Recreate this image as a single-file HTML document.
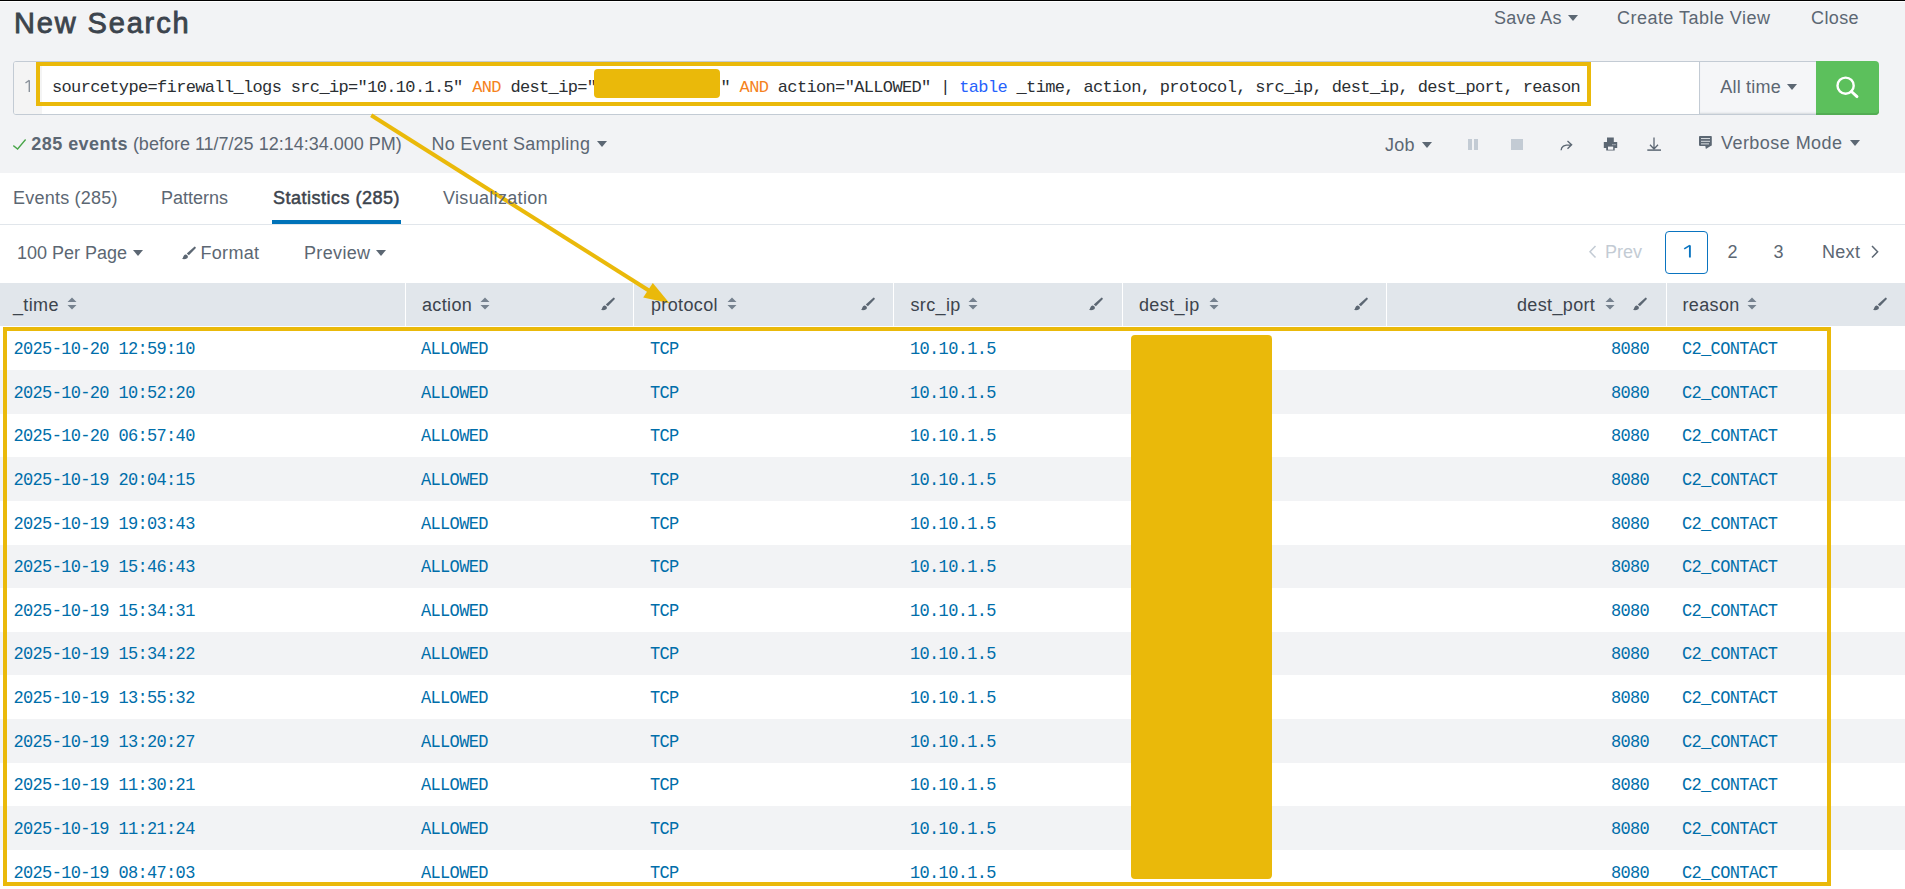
<!DOCTYPE html>
<html><head><meta charset="utf-8">
<style>
html,body{margin:0;padding:0;}
body{width:1905px;height:889px;overflow:hidden;position:relative;background:#fff;font-family:"Liberation Sans",sans-serif;color:#3c444d;}
.a{position:absolute;}
.t{position:absolute;z-index:2;font:18px/20px "Liberation Sans",sans-serif;white-space:pre;color:#5c6773;}
.m{position:absolute;font:17px/20px "Liberation Mono",monospace;letter-spacing:-0.652px;white-space:pre;}
.car{position:absolute;width:0;height:0;border-left:5px solid transparent;border-right:5px solid transparent;border-top:6px solid #5c6773;}
#top{position:absolute;left:0;top:0;width:1905px;height:173px;background:#f2f3f5;}
.row{position:absolute;left:0;width:1905px;height:43.65px;}
.alt{background:#f2f3f5;}
.cell{position:absolute;font:17px/20px "Liberation Mono",monospace;letter-spacing:-0.665px;white-space:pre;color:#006eaa;transform:scaleY(1.08);transform-origin:0 15px;}
.hd{position:absolute;top:283px;height:43px;background:#e1e6eb;}
.hdl{position:absolute;z-index:2;font:18px/20px "Liberation Sans",sans-serif;white-space:pre;color:#3c444d;top:294.6px;letter-spacing:0.35px;}
.sort{position:absolute;top:297px;width:10px;height:13px;}
.brush{position:absolute;top:296.5px;width:15px;height:15px;}
</style></head>
<body>
<div id="top"></div>
<div class="a" style="left:0;top:0;width:1905px;height:1px;background:#000"></div>
<div class="a" style="left:0;top:1px;width:1905px;height:1px;background:#fff"></div>

<!-- title -->
<div class="a" style="left:14px;top:6.3px;font:29px/34px 'Liberation Sans',sans-serif;color:#3c444d;white-space:pre;letter-spacing:1.85px;-webkit-text-stroke:0.85px #3c444d">New Search</div>

<!-- top links -->
<div class="t" style="left:1494px;top:8.2px;letter-spacing:0.25px">Save As</div>
<div class="car" style="left:1568px;top:15px"></div>
<div class="t" style="left:1617px;top:8.2px;letter-spacing:0.47px">Create Table View</div>
<div class="t" style="left:1811px;top:8.2px;letter-spacing:0.4px">Close</div>

<!-- search box -->
<div class="a" style="left:13px;top:61px;width:1685px;height:52px;border:1px solid #c3cbd4;border-radius:3px 0 0 3px;background:#fff"></div>
<div class="a" style="left:14px;top:62px;width:28px;height:52px;background:#f4f4f4;border-radius:2px 0 0 2px"></div>
<svg class="a" style="left:24px;top:79px" width="8" height="14" viewBox="0 0 8 14"><path d="M5.3 1.2 V13.1 M1.5 4 L5.3 1.2" fill="none" stroke="#8a929b" stroke-width="1.4"/></svg>
<div class="m" style="left:52px;top:77.6px;color:#2b2f33"><span>sourcetype=firewall_logs src_ip="10.10.1.5" </span><span style="color:#f58220">AND</span><span> dest_ip="             " </span><span style="color:#f58220">AND</span><span> action="ALLOWED" | </span><span style="color:#2662fc">table</span><span> _time, action, protocol, src_ip, dest_ip, dest_port, reason</span></div>
<!-- redaction in query -->
<div class="a" style="left:594px;top:69px;width:126px;height:29px;background:#eab90a;border-radius:4px"></div>
<!-- yellow annotation around query -->
<div class="a" style="left:36px;top:62px;width:1547px;height:36px;border:4px solid #eab90a"></div>

<!-- time picker -->
<div class="a" style="left:1699px;top:61px;width:116px;height:52px;border:1px solid #c3cbd4;border-right:none;background:#f5f6f8;box-shadow:inset 0 -2px 2px -1px #d5d9de"></div>
<div class="t" style="left:1720.3px;top:76.8px;color:#5c6773;letter-spacing:0.2px">All time</div>
<div class="car" style="left:1787px;top:84px"></div>
<!-- search button -->
<div class="a" style="left:1816px;top:61px;width:63px;height:54px;background:#5cc05c;border-radius:0 4px 4px 0;box-shadow:inset 0 -2px 0 #53ad53"></div>
<svg class="a" style="left:1816px;top:61px" width="63" height="54" viewBox="0 0 63 54">
  <circle cx="29.6" cy="24.7" r="8.1" fill="none" stroke="#fff" stroke-width="2.4"/>
  <line x1="35.4" y1="30.5" x2="41" y2="35.6" stroke="#fff" stroke-width="2.9" stroke-linecap="round"/>
</svg>

<!-- status row -->
<svg class="a" style="left:13px;top:139px" width="14" height="12" viewBox="0 0 14 12"><path d="M0.3 6.6 L4.6 10 L12.6 0.5" fill="none" stroke="#48a548" stroke-width="1.3"/></svg>
<div class="t" style="left:31.3px;top:133.8px;color:#5c6773"><b style="color:#5c6773;letter-spacing:0.45px">285 events</b> (before 11/7/25 12:14:34.000 PM)</div>
<div class="t" style="left:431.5px;top:133.8px;letter-spacing:0.27px">No Event Sampling</div>
<div class="car" style="left:597px;top:141px"></div>

<div class="t" style="left:1385px;top:135px;letter-spacing:0.3px">Job</div>
<div class="car" style="left:1421.5px;top:142px"></div>
<div class="a" style="left:1467.5px;top:139.3px;width:4px;height:11px;background:#c3cbd4"></div>
<div class="a" style="left:1474px;top:139.3px;width:4px;height:11px;background:#c3cbd4"></div>
<div class="a" style="left:1511px;top:139.3px;width:11.5px;height:11px;background:#c3cbd4"></div>
<svg class="a" style="left:1559px;top:139px" width="15" height="13" viewBox="0 0 15 13"><path d="M2.1 11.3 C2.3 7.5 4.5 5.8 12.3 5.8 M8.5 2.1 L12.6 5.8 L8.5 9.7" fill="none" stroke="#5c6773" stroke-width="1.35"/></svg>
<svg class="a" style="left:1603px;top:137px" width="15" height="14" viewBox="0 0 15 14"><path d="M4 0.5h6.8v4.5h-6.8z M0.8 5h13.4v6.1h-2.5v2.5h-8.5v-2.5h-2.4z" fill="#5c6773"/><rect x="5" y="9.6" width="5.2" height="3.1" fill="#f2f3f5"/><rect x="9.3" y="7.2" width="1.3" height="1" fill="#c9ced4"/><rect x="11.3" y="7.2" width="1.3" height="1" fill="#c9ced4"/></svg>
<svg class="a" style="left:1646px;top:137px" width="16" height="14" viewBox="0 0 16 14"><path d="M8 0.5 V12 M4 7.8 L8 12 L12 7.8" fill="none" stroke="#5c6773" stroke-width="1.3"/><path d="M1.3 13.1 H15" stroke="#5c6773" stroke-width="1.5"/></svg>
<svg class="a" style="left:1699px;top:136px" width="14" height="14" viewBox="0 0 14 14"><rect x="0" y="0.1" width="12.8" height="9.8" rx="0.8" fill="#5c6773"/><path d="M6.3 9.8 H12 L6.9 12.9 Z" fill="#5c6773"/><rect x="2" y="2.1" width="9" height="0.95" fill="#e4e7ea"/><rect x="2" y="4.8" width="9" height="0.95" fill="#e4e7ea"/><rect x="2" y="7.4" width="8" height="0.95" fill="#e4e7ea"/></svg>
<div class="t" style="left:1721px;top:133.2px;letter-spacing:0.45px">Verbose Mode</div>
<div class="car" style="left:1849.5px;top:140px"></div>

<!-- tabs -->
<div class="t" style="left:13px;top:187.8px;letter-spacing:0.22px">Events (285)</div>
<div class="t" style="left:161px;top:187.8px">Patterns</div>
<div class="t" style="left:273px;top:187.8px;color:#3c444d;letter-spacing:0.5px;-webkit-text-stroke:0.5px #3c444d">Statistics (285)</div>
<div class="t" style="left:443px;top:187.8px;letter-spacing:0.32px">Visualization</div>
<div class="a" style="left:0;top:224px;width:1905px;height:1px;background:#e1e6eb"></div>
<div class="a" style="left:272px;top:220px;width:129px;height:4px;background:#0073b9"></div>

<!-- toolbar -->
<div class="t" style="left:17px;top:242.8px">100 Per Page</div>
<div class="car" style="left:133px;top:250px"></div>
<svg class="a" style="left:182px;top:246px" width="15" height="15" viewBox="0 0 15 15"><path d="M12.6 0.5 C13.2 0.6 13.8 1.2 13.9 1.9 L6.9 9.2 L4.8 7.4 Z" fill="#5c6773"/><path d="M3.3 8.6 C4.6 8.5 6.1 9.6 5.9 11.1 C5.6 12.8 3.8 13.5 0.1 13.1 C1.3 12.1 1.3 9.2 3.3 8.6 Z" fill="#5c6773"/></svg>
<div class="t" style="left:200.5px;top:242.8px;letter-spacing:0.3px">Format</div>
<div class="t" style="left:304px;top:242.8px;letter-spacing:0.35px">Preview</div>
<div class="car" style="left:376px;top:250px"></div>

<!-- pagination -->
<svg class="a" style="left:1588px;top:244.5px" width="10" height="14" viewBox="0 0 10 14"><path d="M7.5 1 L2 6.8 L7.5 12.6" fill="none" stroke="#c3cbd4" stroke-width="1.5"/></svg>
<div class="t" style="left:1605px;top:241.8px;color:#c3cbd4">Prev</div>
<div class="a" style="left:1665px;top:231.2px;width:40.5px;height:40.5px;border:1.5px solid #0a74c0;border-radius:4px"></div>
<svg class="a" style="left:1681px;top:244px" width="12" height="15" viewBox="0 0 12 15"><path d="M8.9 1.4 V13.5" fill="none" stroke="#0a74c0" stroke-width="1.9"/><path d="M3.2 4.9 L8.9 1.4" fill="none" stroke="#0a74c0" stroke-width="1.7"/></svg>
<div class="t" style="left:1727.5px;top:241.8px">2</div>
<div class="t" style="left:1773.5px;top:241.8px">3</div>
<div class="t" style="left:1822px;top:241.8px;letter-spacing:0.3px">Next</div>
<svg class="a" style="left:1870px;top:244.5px" width="10" height="14" viewBox="0 0 10 14"><path d="M2 1 L7.6 6.8 L2 12.6" fill="none" stroke="#5c6773" stroke-width="1.5"/></svg>

<!-- table header -->
<div class="hd" style="left:0;width:405px"></div>
<div class="hd" style="left:406px;width:227px"></div>
<div class="hd" style="left:634px;width:259px"></div>
<div class="hd" style="left:894px;width:228px"></div>
<div class="hd" style="left:1123px;width:263px"></div>
<div class="hd" style="left:1387px;width:279px"></div>
<div class="hd" style="left:1667px;width:238px"></div>

<div class="hdl" style="left:13px">_time</div>
<div class="hdl" style="left:422px">action</div>
<div class="hdl" style="left:651px">protocol</div>
<div class="hdl" style="left:910.5px">src_ip</div>
<div class="hdl" style="left:1139px">dest_ip</div>
<div class="hdl" style="left:1517px">dest_port</div>
<div class="hdl" style="left:1682.5px">reason</div>

<svg class="sort" style="left:66.5px" viewBox="0 0 10 13"><path d="M5 0.5 L9.5 5 H0.5 Z M5 12.5 L9.5 8 H0.5 Z" fill="#76828f"/></svg>
<svg class="sort" style="left:479.5px" viewBox="0 0 10 13"><path d="M5 0.5 L9.5 5 H0.5 Z M5 12.5 L9.5 8 H0.5 Z" fill="#76828f"/></svg>
<svg class="sort" style="left:727px" viewBox="0 0 10 13"><path d="M5 0.5 L9.5 5 H0.5 Z M5 12.5 L9.5 8 H0.5 Z" fill="#76828f"/></svg>
<svg class="sort" style="left:968px" viewBox="0 0 10 13"><path d="M5 0.5 L9.5 5 H0.5 Z M5 12.5 L9.5 8 H0.5 Z" fill="#76828f"/></svg>
<svg class="sort" style="left:1208.5px" viewBox="0 0 10 13"><path d="M5 0.5 L9.5 5 H0.5 Z M5 12.5 L9.5 8 H0.5 Z" fill="#76828f"/></svg>
<svg class="sort" style="left:1604.5px" viewBox="0 0 10 13"><path d="M5 0.5 L9.5 5 H0.5 Z M5 12.5 L9.5 8 H0.5 Z" fill="#76828f"/></svg>
<svg class="sort" style="left:1747px" viewBox="0 0 10 13"><path d="M5 0.5 L9.5 5 H0.5 Z M5 12.5 L9.5 8 H0.5 Z" fill="#76828f"/></svg>
<svg class="brush" style="left:601px" width="15" height="15" viewBox="0 0 15 15"><path d="M12.6 0.5 C13.2 0.6 13.8 1.2 13.9 1.9 L6.9 9.2 L4.8 7.4 Z" fill="#5c6773"/><path d="M3.3 8.6 C4.6 8.5 6.1 9.6 5.9 11.1 C5.6 12.8 3.8 13.5 0.1 13.1 C1.3 12.1 1.3 9.2 3.3 8.6 Z" fill="#5c6773"/></svg>
<svg class="brush" style="left:861px" width="15" height="15" viewBox="0 0 15 15"><path d="M12.6 0.5 C13.2 0.6 13.8 1.2 13.9 1.9 L6.9 9.2 L4.8 7.4 Z" fill="#5c6773"/><path d="M3.3 8.6 C4.6 8.5 6.1 9.6 5.9 11.1 C5.6 12.8 3.8 13.5 0.1 13.1 C1.3 12.1 1.3 9.2 3.3 8.6 Z" fill="#5c6773"/></svg>
<svg class="brush" style="left:1089px" width="15" height="15" viewBox="0 0 15 15"><path d="M12.6 0.5 C13.2 0.6 13.8 1.2 13.9 1.9 L6.9 9.2 L4.8 7.4 Z" fill="#5c6773"/><path d="M3.3 8.6 C4.6 8.5 6.1 9.6 5.9 11.1 C5.6 12.8 3.8 13.5 0.1 13.1 C1.3 12.1 1.3 9.2 3.3 8.6 Z" fill="#5c6773"/></svg>
<svg class="brush" style="left:1353.5px" width="15" height="15" viewBox="0 0 15 15"><path d="M12.6 0.5 C13.2 0.6 13.8 1.2 13.9 1.9 L6.9 9.2 L4.8 7.4 Z" fill="#5c6773"/><path d="M3.3 8.6 C4.6 8.5 6.1 9.6 5.9 11.1 C5.6 12.8 3.8 13.5 0.1 13.1 C1.3 12.1 1.3 9.2 3.3 8.6 Z" fill="#5c6773"/></svg>
<svg class="brush" style="left:1633px" width="15" height="15" viewBox="0 0 15 15"><path d="M12.6 0.5 C13.2 0.6 13.8 1.2 13.9 1.9 L6.9 9.2 L4.8 7.4 Z" fill="#5c6773"/><path d="M3.3 8.6 C4.6 8.5 6.1 9.6 5.9 11.1 C5.6 12.8 3.8 13.5 0.1 13.1 C1.3 12.1 1.3 9.2 3.3 8.6 Z" fill="#5c6773"/></svg>
<svg class="brush" style="left:1872.5px" width="15" height="15" viewBox="0 0 15 15"><path d="M12.6 0.5 C13.2 0.6 13.8 1.2 13.9 1.9 L6.9 9.2 L4.8 7.4 Z" fill="#5c6773"/><path d="M3.3 8.6 C4.6 8.5 6.1 9.6 5.9 11.1 C5.6 12.8 3.8 13.5 0.1 13.1 C1.3 12.1 1.3 9.2 3.3 8.6 Z" fill="#5c6773"/></svg>
<div class="a" style="left:405px;top:283px;width:1px;height:43px;background:#fff"></div>
<div class="a" style="left:633px;top:283px;width:1px;height:43px;background:#fff"></div>
<div class="a" style="left:893px;top:283px;width:1px;height:43px;background:#fff"></div>
<div class="a" style="left:1122px;top:283px;width:1px;height:43px;background:#fff"></div>
<div class="a" style="left:1386px;top:283px;width:1px;height:43px;background:#fff"></div>
<div class="a" style="left:1666px;top:283px;width:1px;height:43px;background:#fff"></div>
<div class="row" style="top:326.30px"></div>
<div class="cell" style="left:13.5px;top:339.90px">2025-10-20 12:59:10</div>
<div class="cell" style="left:421px;top:339.90px">ALLOWED</div>
<div class="cell" style="left:650px;top:339.90px">TCP</div>
<div class="cell" style="left:910px;top:339.90px">10.10.1.5</div>
<div class="cell" style="left:1611px;top:339.90px">8080</div>
<div class="cell" style="left:1682px;top:339.90px">C2_CONTACT</div>
<div class="row alt" style="top:369.95px"></div>
<div class="cell" style="left:13.5px;top:383.55px">2025-10-20 10:52:20</div>
<div class="cell" style="left:421px;top:383.55px">ALLOWED</div>
<div class="cell" style="left:650px;top:383.55px">TCP</div>
<div class="cell" style="left:910px;top:383.55px">10.10.1.5</div>
<div class="cell" style="left:1611px;top:383.55px">8080</div>
<div class="cell" style="left:1682px;top:383.55px">C2_CONTACT</div>
<div class="row" style="top:413.60px"></div>
<div class="cell" style="left:13.5px;top:427.20px">2025-10-20 06:57:40</div>
<div class="cell" style="left:421px;top:427.20px">ALLOWED</div>
<div class="cell" style="left:650px;top:427.20px">TCP</div>
<div class="cell" style="left:910px;top:427.20px">10.10.1.5</div>
<div class="cell" style="left:1611px;top:427.20px">8080</div>
<div class="cell" style="left:1682px;top:427.20px">C2_CONTACT</div>
<div class="row alt" style="top:457.25px"></div>
<div class="cell" style="left:13.5px;top:470.85px">2025-10-19 20:04:15</div>
<div class="cell" style="left:421px;top:470.85px">ALLOWED</div>
<div class="cell" style="left:650px;top:470.85px">TCP</div>
<div class="cell" style="left:910px;top:470.85px">10.10.1.5</div>
<div class="cell" style="left:1611px;top:470.85px">8080</div>
<div class="cell" style="left:1682px;top:470.85px">C2_CONTACT</div>
<div class="row" style="top:500.90px"></div>
<div class="cell" style="left:13.5px;top:514.50px">2025-10-19 19:03:43</div>
<div class="cell" style="left:421px;top:514.50px">ALLOWED</div>
<div class="cell" style="left:650px;top:514.50px">TCP</div>
<div class="cell" style="left:910px;top:514.50px">10.10.1.5</div>
<div class="cell" style="left:1611px;top:514.50px">8080</div>
<div class="cell" style="left:1682px;top:514.50px">C2_CONTACT</div>
<div class="row alt" style="top:544.55px"></div>
<div class="cell" style="left:13.5px;top:558.15px">2025-10-19 15:46:43</div>
<div class="cell" style="left:421px;top:558.15px">ALLOWED</div>
<div class="cell" style="left:650px;top:558.15px">TCP</div>
<div class="cell" style="left:910px;top:558.15px">10.10.1.5</div>
<div class="cell" style="left:1611px;top:558.15px">8080</div>
<div class="cell" style="left:1682px;top:558.15px">C2_CONTACT</div>
<div class="row" style="top:588.20px"></div>
<div class="cell" style="left:13.5px;top:601.80px">2025-10-19 15:34:31</div>
<div class="cell" style="left:421px;top:601.80px">ALLOWED</div>
<div class="cell" style="left:650px;top:601.80px">TCP</div>
<div class="cell" style="left:910px;top:601.80px">10.10.1.5</div>
<div class="cell" style="left:1611px;top:601.80px">8080</div>
<div class="cell" style="left:1682px;top:601.80px">C2_CONTACT</div>
<div class="row alt" style="top:631.85px"></div>
<div class="cell" style="left:13.5px;top:645.45px">2025-10-19 15:34:22</div>
<div class="cell" style="left:421px;top:645.45px">ALLOWED</div>
<div class="cell" style="left:650px;top:645.45px">TCP</div>
<div class="cell" style="left:910px;top:645.45px">10.10.1.5</div>
<div class="cell" style="left:1611px;top:645.45px">8080</div>
<div class="cell" style="left:1682px;top:645.45px">C2_CONTACT</div>
<div class="row" style="top:675.50px"></div>
<div class="cell" style="left:13.5px;top:689.10px">2025-10-19 13:55:32</div>
<div class="cell" style="left:421px;top:689.10px">ALLOWED</div>
<div class="cell" style="left:650px;top:689.10px">TCP</div>
<div class="cell" style="left:910px;top:689.10px">10.10.1.5</div>
<div class="cell" style="left:1611px;top:689.10px">8080</div>
<div class="cell" style="left:1682px;top:689.10px">C2_CONTACT</div>
<div class="row alt" style="top:719.15px"></div>
<div class="cell" style="left:13.5px;top:732.75px">2025-10-19 13:20:27</div>
<div class="cell" style="left:421px;top:732.75px">ALLOWED</div>
<div class="cell" style="left:650px;top:732.75px">TCP</div>
<div class="cell" style="left:910px;top:732.75px">10.10.1.5</div>
<div class="cell" style="left:1611px;top:732.75px">8080</div>
<div class="cell" style="left:1682px;top:732.75px">C2_CONTACT</div>
<div class="row" style="top:762.80px"></div>
<div class="cell" style="left:13.5px;top:776.40px">2025-10-19 11:30:21</div>
<div class="cell" style="left:421px;top:776.40px">ALLOWED</div>
<div class="cell" style="left:650px;top:776.40px">TCP</div>
<div class="cell" style="left:910px;top:776.40px">10.10.1.5</div>
<div class="cell" style="left:1611px;top:776.40px">8080</div>
<div class="cell" style="left:1682px;top:776.40px">C2_CONTACT</div>
<div class="row alt" style="top:806.45px"></div>
<div class="cell" style="left:13.5px;top:820.05px">2025-10-19 11:21:24</div>
<div class="cell" style="left:421px;top:820.05px">ALLOWED</div>
<div class="cell" style="left:650px;top:820.05px">TCP</div>
<div class="cell" style="left:910px;top:820.05px">10.10.1.5</div>
<div class="cell" style="left:1611px;top:820.05px">8080</div>
<div class="cell" style="left:1682px;top:820.05px">C2_CONTACT</div>
<div class="row" style="top:850.10px"></div>
<div class="cell" style="left:13.5px;top:863.70px">2025-10-19 08:47:03</div>
<div class="cell" style="left:421px;top:863.70px">ALLOWED</div>
<div class="cell" style="left:650px;top:863.70px">TCP</div>
<div class="cell" style="left:910px;top:863.70px">10.10.1.5</div>
<div class="cell" style="left:1611px;top:863.70px">8080</div>
<div class="cell" style="left:1682px;top:863.70px">C2_CONTACT</div>
<div class="a" style="left:1131px;top:335px;width:141px;height:544px;background:#eab90a;border-radius:4px"></div>
<div class="a" style="left:3px;top:327px;width:1820px;height:551px;border:4px solid #eab90a"></div>
<svg class="a" style="left:0;top:0;z-index:1" width="1905" height="889" viewBox="0 0 1905 889">
<line x1="371.2" y1="115.2" x2="650" y2="291.2" stroke="#eab90a" stroke-width="4"/>
<path d="M669.5 303.3 L643.2 297.4 L652.8 282.9 Z" fill="#eab90a"/>
</svg>
</body></html>
